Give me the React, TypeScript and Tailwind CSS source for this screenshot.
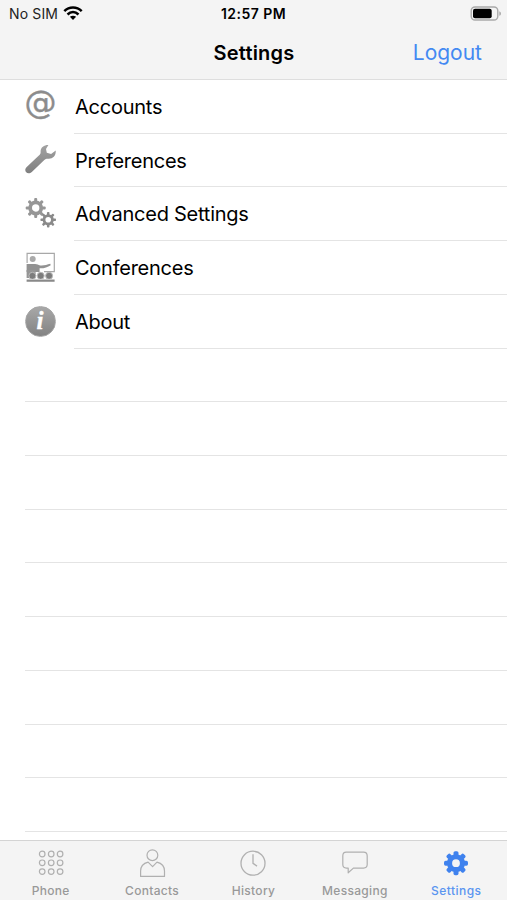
import React from "react";

type GearProps = {
    cx: number;
    cy: number;
    r: number;
    hole: number;
    tooth: number;
    width: number;
    count: number;
    fill: string;
};

const Gear: React.FC<GearProps> = ({ cx, cy, r, hole, tooth, width, count, fill }) => (
    <g>
        {Array.from({ length: count }, (_, i) => (
            <rect
                key={i}
                x={cx - width / 2}
                y={cy - r - tooth}
                width={width}
                height={tooth + 2}
                rx={width / 3}
                fill={fill}
                transform={`rotate(${(360 / count) * i} ${cx} ${cy})`}
            />
        ))}
        <circle cx={cx} cy={cy} r={(r + hole) / 2} fill="none" stroke={fill} strokeWidth={r - hole} />
    </g>
);

const AccountsIcon = () => (
    <span className="flex h-8 w-8 justify-center pr-px font-['DejaVu_Sans'] text-[32px] leading-[25px] text-[#8c8c8c] [-webkit-text-stroke:0.4px_#8c8c8c]">@</span>
);

const WrenchIcon = () => (
    <svg viewBox="0 0 32 32" className="h-8 w-8">
        <defs>
            <linearGradient id="wrench" x1="0" y1="0" x2="0" y2="1">
                <stop offset="0" stopColor="#a2a2a2" />
                <stop offset="1" stopColor="#808080" />
            </linearGradient>
        </defs>
        <path
            d="M23.4 1C19.4.8 15.4 3.4 15.6 7.6c.1 1.6-.2 2.5-1.2 3.5L1.7 23c-1.7 1.6-1.9 3.8-.5 5.3 1.4 1.5 4 1.3 5.6-.4l12.5-12c1.1-1.1 2.3-1.3 4-1.2 4.6.3 7.9-3.3 7.4-8.2l-4.6 3.6-4.3-1.3-.8-3.8z"
            fill="url(#wrench)"
        />
    </svg>
);

const GearsIcon = () => (
    <svg viewBox="0 0 32 32" className="h-8 w-8">
        <Gear cx={10.7} cy={11} r={7.4} hole={3.7} tooth={2.6} width={3} count={8} fill="#969696" />
        <Gear cx={23.2} cy={22.8} r={5.6} hole={2.8} tooth={2.2} width={2.5} count={8} fill="#8a8a8a" />
    </svg>
);

const ConferenceIcon = () => (
    <svg viewBox="0 0 32 32" className="h-8 w-8">
        <path d="M2.1 12V2.4h27.2v18.2H19" fill="none" stroke="#a8a8a8" strokeWidth="1.2" />
        <circle cx="7.7" cy="8" r="3" fill="#aaa" />
        <path d="M1.6 13h8.5c2.3 0 3 1.2 5 1.4 3.8.4 6.8-.8 10.2-1.7l.4 1.5c-3.2 2-6.7 3.3-11.1 3.1V21h-13z" fill="#929292" />
        <path d="M1.6 19h9v8h-9z" fill="#969696" />
        <g fill="#7c7c7c" stroke="#bcbcbc" strokeWidth="1">
            <circle cx="7.4" cy="24.8" r="3.5" />
            <circle cx="15.7" cy="24.8" r="3.5" />
            <circle cx="24.1" cy="24.8" r="3.5" />
        </g>
        <path d="M1.6 29.9h28" stroke="#747474" strokeWidth="1.5" />
        <path d="M1.6 28.5h28" stroke="#c8c8c8" strokeWidth="1" />
    </svg>
);

const AboutIcon = () => (
    <span className="mt-px flex h-[31px] w-[31px] items-center justify-center rounded-full border border-[#a6a6a6] bg-linear-to-b from-[#a8a8a8] to-[#838383] pr-px pb-0.5 font-['Liberation_Serif'] text-[25px] leading-none font-bold text-white italic [-webkit-text-stroke:0.4px_white]">
        i
    </span>
);

const PhoneIcon = () => (
    <svg viewBox="0 0 28 30" className="h-[30px] w-7" fill="none" stroke="#b0b0b0" strokeWidth="1.2">
        {[6, 14.8, 23.6].map((y) =>
            [5.2, 14.2, 23.1].map((x) => <circle key={`${x}-${y}`} cx={x} cy={y} r="2.8" />)
        )}
    </svg>
);

const ContactsIcon = () => (
    <svg viewBox="0 0 28 30" className="h-[30px] w-7" fill="none" stroke="#b0b0b0" strokeWidth="1.2">
        <circle cx="14.4" cy="7.2" r="5.4" />
        <path d="M10.1 14.1C5.4 15.3 2.6 18.5 2.6 23v5.4h23.9V23c0-4.5-2.8-7.7-7.5-8.9L14.6 18.6z" strokeLinejoin="round" />
    </svg>
);

const HistoryIcon = () => (
    <svg viewBox="0 0 28 30" className="h-[30px] w-7" fill="none" stroke="#b0b0b0" strokeWidth="1.3">
        <circle cx="14" cy="15.2" r="12" />
        <path d="M14 6.3v9l4 2.8" />
    </svg>
);

const MessagingIcon = () => (
    <svg viewBox="0 0 28 30" className="h-[30px] w-7" fill="none" stroke="#b0b0b0" strokeWidth="1.2">
        <path d="M5.2 4.2h17.3c2.4 0 3.7 1.4 3.7 3.8v8.6c0 2.3-1.3 3.5-3.7 3.5H12.4l-5.2 4.7v-4.7H5.4c-2.4 0-3.6-1.2-3.6-3.5V8c0-2.4 1.2-3.8 3.4-3.8z" strokeLinejoin="round" />
    </svg>
);

const SettingsIcon = () => (
    <svg viewBox="0 0 28 30" className="h-[30px] w-7">
        <Gear cx={14} cy={15.2} r={9} hole={3.9} tooth={3} width={5} count={8} fill="#3f82ee" />
    </svg>
);

const WifiIcon = () => (
    <svg viewBox="0 0 20 15" className="h-[15px] w-5" fill="none" stroke="#000" strokeWidth="2.5">
        <path d="M1.3 5.1c5-4.9 12.4-4.9 17.4 0" />
        <path d="M4.5 8.5c3.3-3.2 7.7-3.2 11 0" />
        <path d="M10 14l-3.1-3.2c1.8-1.5 4.4-1.5 6.2 0z" fill="#000" stroke="none" />
    </svg>
);

const BatteryIcon = () => (
    <svg viewBox="0 0 32 15" className="h-[15px] w-8">
        <rect x="1.2" y="1" width="26.6" height="13" rx="3.8" fill="none" stroke="#a9a9a9" strokeWidth="1.4" />
        <rect x="3" y="2.8" width="18.7" height="9.4" rx="2" fill="#000" />
        <path d="M29.3 5.2c2.2.9 2.2 3.7 0 4.6z" fill="#a9a9a9" />
    </svg>
);

const rows = [
    { label: "Accounts", icon: <AccountsIcon /> },
    { label: "Preferences", icon: <WrenchIcon /> },
    { label: "Advanced Settings", icon: <GearsIcon /> },
    { label: "Conferences", icon: <ConferenceIcon /> },
    { label: "About", icon: <AboutIcon /> },
];

const tabs = [
    { label: "Phone", icon: <PhoneIcon />, active: false },
    { label: "Contacts", icon: <ContactsIcon />, active: false },
    { label: "History", icon: <HistoryIcon />, active: false },
    { label: "Messaging", icon: <MessagingIcon />, active: false },
    { label: "Settings", icon: <SettingsIcon />, active: true },
];

const App: React.FC = () => {
    return (
        <div className="flex h-[900px] w-[507px] flex-col overflow-hidden bg-white font-['Inter',sans-serif] text-black">
            <header className="h-20 shrink-0 border-b border-[#dedede] bg-[#f4f4f4]">
                <div className="grid h-[27px] grid-cols-3 items-center text-sm">
                    <div className="flex items-center gap-[5px] pl-[9px] text-[#222]">
                        <span className="tracking-[0.15px]">No SIM</span>
                        <WifiIcon />
                    </div>
                    <span className="text-center font-semibold tracking-[0.45px]">12:57 PM</span>
                    <div className="flex justify-end pr-[5px]">
                        <BatteryIcon />
                    </div>
                </div>
                <div className="grid h-[51px] grid-cols-3 items-center">
                    <h1 className="col-start-2 pl-px text-center text-xl font-semibold tracking-[0.2px]">Settings</h1>
                    <button className="pr-[25px] text-right text-[21px] text-[#4389f2]">Logout</button>
                </div>
            </header>

            <main className="min-h-0 flex-1 overflow-hidden">
                {rows.map((row) => (
                    <div key={row.label} className="flex h-[53.73px] pl-[25px]">
                        <div className="flex w-[49px] items-center pb-0.5">{row.icon}</div>
                        <div className="flex flex-1 items-center border-b border-[#e4e4e4] pt-px pl-px text-[20px]">
                            <span className="tracking-[-0.25px]">{row.label}</span>
                        </div>
                    </div>
                ))}
                {Array.from({ length: 9 }, (_, i) => (
                    <div key={i} className="ml-[25px] h-[53.73px] border-b border-[#e4e4e4]" />
                ))}
            </main>

            <nav className="grid h-[60px] shrink-0 grid-cols-5 border-t border-[#d4d4d4] bg-[#f4f4f4]">
                {tabs.map((tab) => (
                    <div key={tab.label} className="flex flex-col items-center pt-[7px]">
                        {tab.icon}
                        <span
                            className={
                                tab.active
                                    ? "mt-[5px] text-xs leading-4 font-medium tracking-[0.45px] text-[#5a95f0]"
                                    : "mt-[5px] text-xs leading-4 font-medium tracking-[0.3px] text-[#999]"
                            }
                        >
                            {tab.label}
                        </span>
                    </div>
                ))}
            </nav>
        </div>
    );
};

export default App;
